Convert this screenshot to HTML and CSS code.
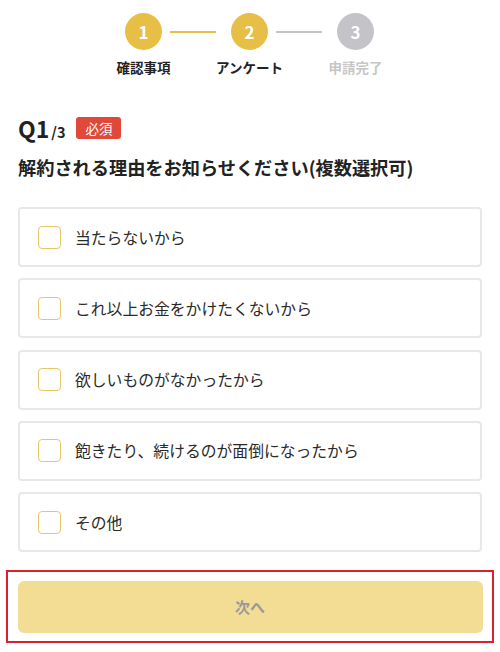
FILE: index.html
```html
<!DOCTYPE html>
<html lang="ja">
<head>
<meta charset="utf-8">
<link rel="stylesheet" href="styles.css">
</head>
<body>
<div class="page">
  <div class="steps">
    <div class="step done">
      <div class="circle">1</div>
      <div class="label">確認事項</div>
    </div>
    <div class="line active"></div>
    <div class="step done">
      <div class="circle">2</div>
      <div class="label">アンケート</div>
    </div>
    <div class="line"></div>
    <div class="step todo">
      <div class="circle">3</div>
      <div class="label">申請完了</div>
    </div>
  </div>

  <div class="qhead">
    <span class="qnum">Q1</span><span class="qtotal">/3</span>
    <span class="badge">必須</span>
  </div>
  <h1 class="question">解約される理由をお知らせください(複数選択可)</h1>

  <ul class="options">
    <li class="option"><span class="box"></span><span class="otext">当たらないから</span></li>
    <li class="option"><span class="box"></span><span class="otext">これ以上お金をかけたくないから</span></li>
    <li class="option"><span class="box"></span><span class="otext">欲しいものがなかったから</span></li>
    <li class="option"><span class="box"></span><span class="otext">飽きたり、続けるのが面倒になったから</span></li>
    <li class="option"><span class="box"></span><span class="otext">その他</span></li>
  </ul>

  <div class="highlight">
    <button class="next">次へ</button>
  </div>
</div>
</body>
</html>
```

FILE: styles.css
```css
* { box-sizing: border-box; }
html, body { margin: 0; padding: 0; background: #fff; }
body {
  font-family: "Noto Sans CJK JP", "Noto Sans", sans-serif;
  color: #333;
  width: 500px;
}
.page { padding: 0 18px; }

.steps {
  display: flex;
  align-items: flex-start;
  padding-top: 13px;
  padding-left: 107px;
}
.step {
  display: flex;
  flex-direction: column;
  align-items: center;
  width: 37px;
}
.circle {
  width: 37px;
  height: 37px;
  border-radius: 50%;
  background: #e8bf46;
  color: #fff;
  font-weight: 700;
  font-size: 17px;
  display: flex;
  align-items: center;
  justify-content: center;
  line-height: 1;
}
.step.todo .circle { background: #c3c3c8; }
.label {
  margin-top: 8px;
  font-size: 13.5px;
  font-weight: 700;
  white-space: nowrap;
  color: #222;
  line-height: 18px;
}
.step.todo .label { color: #c6c6c6; }
.line {
  width: 46px;
  height: 2px;
  background: #c3c3c8;
  margin: 18px 15px 0 8px;
}
.line.active { background: #e8bf46; }

.qhead {
  display: flex;
  align-items: baseline;
  margin-top: 40px;
  height: 24px;
}
.qnum { font-size: 23px; font-weight: 700; color: #222; line-height: 24px; }
.qtotal { font-size: 14.5px; font-weight: 700; color: #222; margin-left: 2px; }
.badge {
  align-self: center;
  margin-left: 11px;
  background: #e0483a;
  color: #fff;
  font-size: 13.5px;
  line-height: 22px;
  height: 22px;
  padding: 0 9px;
  border-radius: 3px;
}
.question {
  margin: 14px 0 0;
  font-size: 18.2px;
  font-weight: 700;
  color: #222;
  line-height: 26px;
}

.options {
  list-style: none;
  margin: 27px 0 0;
  padding: 0;
  display: flex;
  flex-direction: column;
  gap: 11.3px;
}
.option {
  height: 60px;
  border: 2px solid #e8e8e8;
  border-radius: 4px;
  display: flex;
  align-items: center;
  padding-left: 18px;
}
.box {
  width: 23px;
  height: 23px;
  border: 1.5px solid #e6c66a;
  border-radius: 4px;
  flex: none;
}
.otext {
  margin-left: 14px;
  font-size: 15.8px;
  color: #2a2a2a;
}

.highlight {
  margin: 18px -12px 0;
  border: 2.5px solid #db1f2b;
  padding: 8.5px 9.5px;
}
.next {
  display: block;
  width: 100%;
  height: 52px;
  border: none;
  border-radius: 6px;
  background: #f3dd95;
  color: #999;
  font-family: inherit;
  font-size: 15px;
  font-weight: 700;
}
```
